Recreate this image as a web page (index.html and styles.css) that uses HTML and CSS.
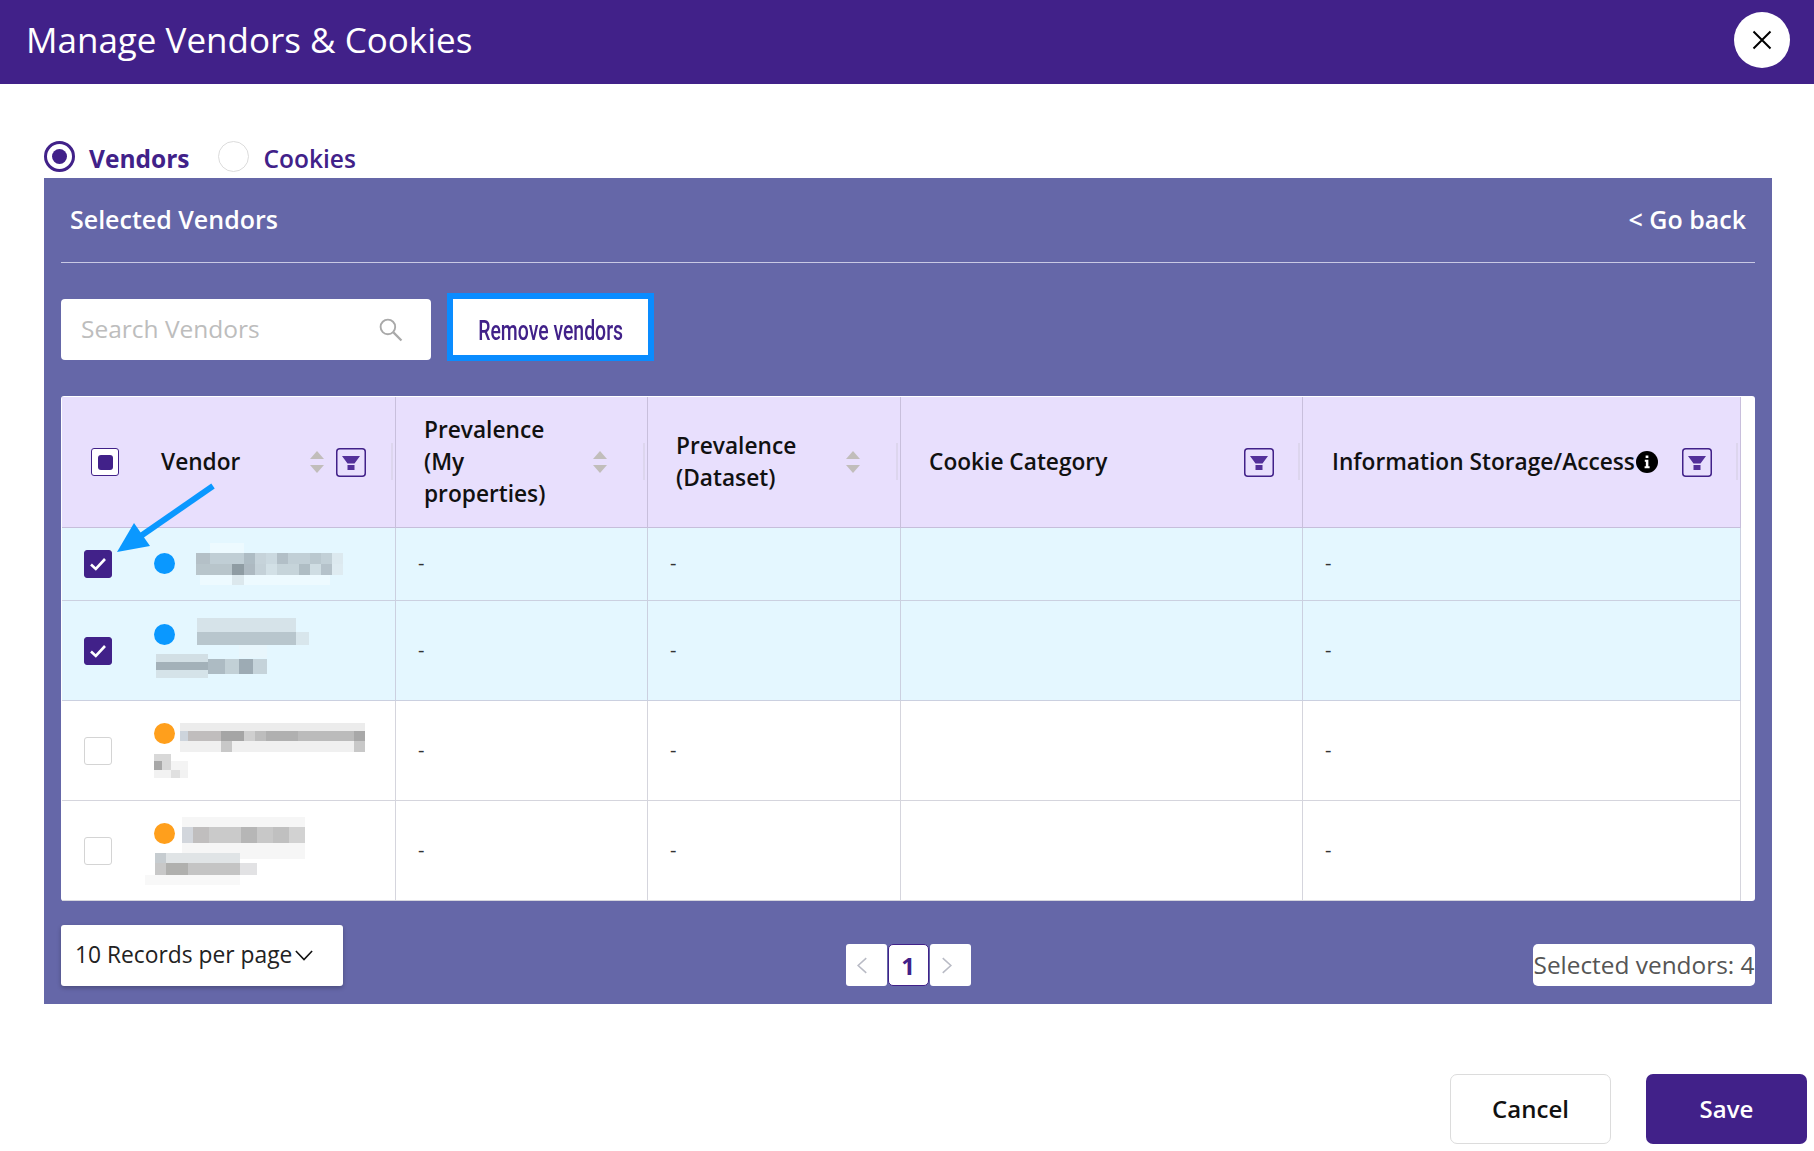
FILE: index.html
```html
<!DOCTYPE html>
<html lang="en">
<head>
<meta charset="utf-8">
<title>Manage Vendors &amp; Cookies</title>
<link rel="stylesheet" href="styles.css">
</head>
<body>
<header class="topbar">
  <h1 class="title">Manage Vendors &amp; Cookies</h1>
  <button class="close" aria-label="Close">
    <svg width="20" height="20" viewBox="0 0 20 20"><path d="M1.5 1.5 18.5 18.5M18.5 1.5 1.5 18.5" fill="none" stroke="#000" stroke-width="2"/></svg>
  </button>
</header>

<div class="radios">
  <span class="radio radio-on"></span><span class="radio-label label-on">Vendors</span>
  <span class="radio radio-off"></span><span class="radio-label">Cookies</span>
</div>

<main class="panel">
  <div class="panel-head">
    <span>Selected Vendors</span>
    <span>&lt; Go back</span>
  </div>

  <div class="toolbar">
    <div class="search">
      <span class="search-text">Search Vendors</span>
      <svg width="25" height="25" viewBox="0 0 24 24"><circle cx="9.5" cy="9.5" r="7" fill="none" stroke="#a9a9a9" stroke-width="1.8"/><path d="M14.8 14.8 22.5 22.5" stroke="#a9a9a9" stroke-width="2.2"/></svg>
    </div>
    <button class="remove"><span class="remove-text">Remove vendors</span></button>
  </div>

  <div class="table-wrap">
    <div class="table">
      <div class="th th-vendor">
        <span class="box box-mixed"><span class="box-dot"></span></span>
        <span class="th-text vendor-label">Vendor</span>
        <svg class="sort" width="14" height="22" viewBox="0 0 14 22"><path d="M7 0 14 8H0ZM0 14H14L7 22Z" fill="#c1bdbb"/></svg>
        <svg class="filter" width="30" height="29" viewBox="0 0 30 29"><rect x=".75" y=".75" width="28.5" height="27.5" rx="3" fill="none" stroke="#412189" stroke-width="1.5"/><path d="M6 8H24L18.5 15.5H11.5ZM11.5 17H18.5V22H11.5Z" fill="#53309a"/></svg>
        <i class="grip"></i>
      </div>
      <div class="th th-prev">
        <span class="th-text prev-text">Prevalence<br>(My<br>properties)</span>
        <svg class="sort" width="14" height="22" viewBox="0 0 14 22"><path d="M7 0 14 8H0ZM0 14H14L7 22Z" fill="#c1bdbb"/></svg>
        <i class="grip"></i>
      </div>
      <div class="th th-prev">
        <span class="th-text prev-text">Prevalence<br>(Dataset)</span>
        <svg class="sort" width="14" height="22" viewBox="0 0 14 22"><path d="M7 0 14 8H0ZM0 14H14L7 22Z" fill="#c1bdbb"/></svg>
        <i class="grip"></i>
      </div>
      <div class="th th-cookie">
        <span class="th-text">Cookie Category</span>
        <svg class="filter" width="30" height="29" viewBox="0 0 30 29"><rect x=".75" y=".75" width="28.5" height="27.5" rx="3" fill="none" stroke="#412189" stroke-width="1.5"/><path d="M6 8H24L18.5 15.5H11.5ZM11.5 17H18.5V22H11.5Z" fill="#53309a"/></svg>
        <i class="grip"></i>
      </div>
      <div class="th th-info">
        <span class="th-text">Information Storage/Access</span>
        <svg class="info" width="22" height="22" viewBox="0 0 21 21"><circle cx="10.5" cy="10.5" r="10.5" fill="#000"/><path d="M9.2 4.2H11.8V6.6H9.2ZM8.4 8.4H11.8V14.6H13V16.4H8.2V14.6H9.4V10.2H8.4Z" fill="#fff"/></svg>
        <svg class="filter" width="30" height="29" viewBox="0 0 30 29"><rect x=".75" y=".75" width="28.5" height="27.5" rx="3" fill="none" stroke="#412189" stroke-width="1.5"/><path d="M6 8H24L18.5 15.5H11.5ZM11.5 17H18.5V22H11.5Z" fill="#53309a"/></svg>
        <i class="grip"></i>
      </div>

      <!-- row 1 -->
      <div class="td td-vendor sel">
        <svg class="mosaic" width="333" height="73" viewBox="62 528 333 73">
          <rect x="210" y="543" width="34" height="10" fill="#edfaff"/><rect x="200" y="575" width="130" height="10" fill="#edfaff"/><rect x="232" y="575" width="12" height="10" fill="#dce8ed"/>
          <rect x="196" y="553" width="14" height="11" fill="#b4c0c7"/><rect x="210" y="553" width="34" height="11" fill="#c0ced5"/><rect x="244" y="553" width="11" height="11" fill="#aebcc4"/><rect x="255" y="553" width="11" height="11" fill="#c6d3da"/><rect x="266" y="553" width="11" height="11" fill="#cbd9e0"/><rect x="277" y="553" width="11" height="11" fill="#b2bfc7"/><rect x="288" y="553" width="22" height="11" fill="#c1cfd6"/><rect x="310" y="553" width="11" height="11" fill="#bac8cf"/><rect x="321" y="553" width="11" height="11" fill="#c2d0d7"/><rect x="332" y="553" width="11" height="11" fill="#dce9ef"/>
          <rect x="196" y="564" width="36" height="11" fill="#b8c5cb"/><rect x="232" y="564" width="12" height="11" fill="#8f9ca3"/><rect x="244" y="564" width="11" height="11" fill="#adb9c1"/><rect x="255" y="564" width="11" height="11" fill="#c4d1d8"/><rect x="266" y="564" width="11" height="11" fill="#d2e0e6"/><rect x="277" y="564" width="22" height="11" fill="#c6d4da"/><rect x="299" y="564" width="11" height="11" fill="#afbdc4"/><rect x="310" y="564" width="11" height="11" fill="#cfdde3"/><rect x="321" y="564" width="11" height="11" fill="#b5c2ca"/><rect x="332" y="564" width="11" height="11" fill="#deebf1"/>
        </svg>
        <span class="box box-on"><svg width="18" height="14" viewBox="0 0 18 14"><path d="M2 7.5 6.8 12 16 2" fill="none" stroke="#fff" stroke-width="2.6"/></svg></span>
        <span class="dot dot-blue dot-mid"></span>
      </div>
      <div class="td sel"><span class="dash">-</span></div>
      <div class="td sel"><span class="dash">-</span></div>
      <div class="td sel"></div>
      <div class="td sel"><span class="dash">-</span></div>

      <!-- row 2 -->
      <div class="td td-vendor sel">
        <svg class="mosaic" width="333" height="100" viewBox="62 601 333 100">
          <rect x="197" y="618" width="99" height="14" fill="#d6e3e9"/><rect x="197" y="632" width="99" height="13" fill="#b8c6cd"/><rect x="296" y="632" width="13" height="13" fill="#d8e6ec"/><rect x="239" y="645" width="28" height="13" fill="#e8f6fc"/>
          <rect x="156" y="654" width="52" height="8" fill="#d2dfe5"/><rect x="156" y="662" width="52" height="8" fill="#a3b1b9"/><rect x="156" y="670" width="52" height="8" fill="#d5e3e9"/>
          <rect x="208" y="659" width="17" height="15" fill="#adbbc3"/><rect x="225" y="659" width="14" height="15" fill="#c2d0d6"/><rect x="239" y="659" width="14" height="15" fill="#9dabb4"/><rect x="253" y="659" width="14" height="15" fill="#c5d3da"/>
        </svg>
        <span class="box box-on"><svg width="18" height="14" viewBox="0 0 18 14"><path d="M2 7.5 6.8 12 16 2" fill="none" stroke="#fff" stroke-width="2.6"/></svg></span>
        <span class="dot dot-blue dot-high dot-up"></span>
      </div>
      <div class="td sel"><span class="dash">-</span></div>
      <div class="td sel"><span class="dash">-</span></div>
      <div class="td sel"></div>
      <div class="td sel"><span class="dash">-</span></div>

      <!-- row 3 -->
      <div class="td td-vendor">
        <svg class="mosaic" width="333" height="100" viewBox="62 701 333 100">
          <rect x="180" y="723" width="185" height="8" fill="#ececec"/>
          <rect x="180" y="731" width="8" height="10" fill="#cdd4dc"/><rect x="188" y="731" width="33" height="10" fill="#c0bdbd"/><rect x="221" y="731" width="23" height="10" fill="#a5a5a5"/><rect x="244" y="731" width="11" height="10" fill="#cfcfcf"/><rect x="255" y="731" width="11" height="10" fill="#bdbdbd"/><rect x="266" y="731" width="32" height="10" fill="#b0b0b0"/><rect x="298" y="731" width="56" height="10" fill="#bbb"/><rect x="354" y="731" width="11" height="10" fill="#a8a8a8"/>
          <rect x="180" y="741" width="185" height="11" fill="#f0f0f0"/><rect x="221" y="741" width="11" height="11" fill="#c8c8c8"/><rect x="354" y="741" width="11" height="11" fill="#c8c8c8"/>
          <rect x="154" y="754" width="17" height="7" fill="#d8d8d8"/><rect x="154" y="761" width="8" height="9" fill="#a8a8a8"/><rect x="162" y="761" width="9" height="9" fill="#d8d8d8"/><rect x="171" y="761" width="17" height="9" fill="#f4f4f4"/><rect x="154" y="770" width="34" height="8" fill="#f2f2f2"/><rect x="171" y="770" width="9" height="8" fill="#e0e0e0"/>
        </svg>
        <span class="box"></span>
        <span class="dot dot-orange dot-high"></span>
      </div>
      <div class="td"><span class="dash">-</span></div>
      <div class="td"><span class="dash">-</span></div>
      <div class="td"></div>
      <div class="td"><span class="dash">-</span></div>

      <!-- row 4 -->
      <div class="td td-vendor">
        <svg class="mosaic" width="333" height="100" viewBox="62 801 333 100">
          <rect x="182" y="817" width="123" height="10" fill="#f6f6f6"/><rect x="182" y="843" width="123" height="16" fill="#f6f6f6"/>
          <rect x="182" y="827" width="11" height="16" fill="#d2d6dc"/><rect x="193" y="827" width="16" height="16" fill="#c0bebe"/><rect x="209" y="827" width="32" height="16" fill="#cacaca"/><rect x="241" y="827" width="16" height="16" fill="#b6b6b6"/><rect x="257" y="827" width="16" height="16" fill="#c8c8c8"/><rect x="273" y="827" width="16" height="16" fill="#c0c0c0"/><rect x="289" y="827" width="16" height="16" fill="#d2d2d2"/>
          <rect x="155" y="853" width="11" height="10" fill="#c6ccd0"/><rect x="166" y="853" width="74" height="10" fill="#e0e4e6"/>
          <rect x="155" y="863" width="11" height="12" fill="#c8c8c8"/><rect x="166" y="863" width="22" height="12" fill="#b0b0ae"/><rect x="188" y="863" width="52" height="12" fill="#c4c4c4"/><rect x="240" y="863" width="17" height="12" fill="#e2e2e4"/>
          <rect x="145" y="875" width="95" height="10" fill="#f8f8f8"/>
        </svg>
        <span class="box"></span>
        <span class="dot dot-orange dot-high"></span>
      </div>
      <div class="td"><span class="dash">-</span></div>
      <div class="td"><span class="dash">-</span></div>
      <div class="td"></div>
      <div class="td"><span class="dash">-</span></div>
    </div>
    <svg class="arrow" width="110" height="80" viewBox="0 0 110 80"><path d="M103 6 25 60" fill="none" stroke="#0a98ff" stroke-width="6"/><path d="M7 72 24 43 40 66Z" fill="#0a98ff"/></svg>
  </div>

  <div class="pager-row">
    <div class="per-page">
      <span class="per-page-text">10 Records per page</span>
      <svg width="18" height="11" viewBox="0 0 20 12"><path d="M1 1 10 10.5 19 1" fill="none" stroke="#111" stroke-width="1.8"/></svg>
    </div>
    <div class="pager">
      <span class="page page-prev"><svg width="12" height="17" viewBox="0 0 14 22"><path d="M12.5 1.5 2 11 12.5 20.5" fill="none" stroke="#b9bbc5" stroke-width="2"/></svg></span>
      <span class="page page-on">1</span>
      <span class="page page-next"><svg width="12" height="17" viewBox="0 0 14 22"><path d="M1.5 1.5 12 11 1.5 20.5" fill="none" stroke="#b9bbc5" stroke-width="2"/></svg></span>
    </div>
    <div class="count">Selected vendors: 4</div>
  </div>
</main>

<footer class="actions">
  <button class="btn btn-cancel"><span class="btn-text">Cancel</span></button>
  <button class="btn btn-save"><span class="btn-text">Save</span></button>
</footer>
</body>
</html>
```

FILE: styles.css
```css
* { box-sizing: border-box; }
html, body { margin: 0; padding: 0; background: #fff; }
body { font-family: "Open Sans", "Noto Sans", sans-serif; color: #111; width: 1814px; height: 1151px; overflow: hidden; }

.topbar { height: 84px; background: #412189; display: flex; align-items: center; justify-content: space-between; padding: 0 24px 0 26px; }
.title { margin: 0 0 6px; font-size: 35px; font-weight: 400; color: #fff; line-height: 1; }
.close { width: 56px; height: 56px; margin-bottom: 4px; border-radius: 50%; border: 0; background: #fff; padding: 0; display: flex; align-items: center; justify-content: center; }

.radios { height: 94px; padding: 57px 0 0 44px; display: flex; align-items: flex-start; }
.radio { width: 31px; height: 31px; border-radius: 50%; flex: none; background: #fff; }
.radio-on { border: 3px solid #412189; position: relative; display: flex; align-items: center; justify-content: center; }
.radio-on::after { content: ""; width: 15px; height: 15px; border-radius: 50%; background: #412189; }
.radio-off { border: 1px solid #dcdcdc; margin-left: 29px; }
.radio-label { font-size: 24.5px; font-weight: 600; color: #412189; line-height: 37px; margin-left: 14px; margin-top: -1px; }
.label-on { font-weight: 700; }

.panel { margin-left: 44px; width: 1728px; height: 826px; background: #6567a8; padding: 0 17px; }
.panel-head { height: 85px; border-bottom: 1px solid #c9c9e4; display: flex; align-items: center; justify-content: space-between; padding: 0 9px 3px; color: #fff; font-size: 25px; font-weight: 600; }

.toolbar { display: flex; align-items: flex-start; gap: 16px; margin-top: 30px; height: 103px; padding-top: 6px; }
.search { width: 370px; height: 61px; background: #fff; border-radius: 4px; display: flex; align-items: center; justify-content: space-between; padding: 0 28px 0 20px; }
.search-text { font-size: 24.5px; color: #bdbdbd; margin-bottom: 2px; }
.remove { width: 207px; height: 68px; margin-top: -6px; background: #fff; border: 6px solid #0a8cff; padding: 8px 0 0; display: flex; align-items: center; justify-content: center; }
.remove-text { font-family: "Roboto", sans-serif; font-size: 27px; font-weight: 500; color: #412189; white-space: nowrap; display: inline-block; transform: scaleX(.72); }

.table-wrap { position: relative; width: 1694px; height: 505px; background: #fff; border-radius: 3px; padding: 1px 0 0 1px; }
.table { display: grid; grid-template-columns: 334px 252px 253px 402px 438px; grid-template-rows: 131px 73px 100px 100px 100px; width: 1679px; height: 504px; }
.th { background: #e8dffd; border-right: 1px solid #c8bfdc; border-bottom: 1px solid #c6bedb; display: flex; align-items: center; position: relative; padding-bottom: 3px; }
.th-text { font-size: 22.7px; font-weight: 600; color: #111; line-height: 32px; }
.grip { position: absolute; right: 2px; top: 46px; height: 37px; width: 2px; background: #ddd6ee; }
.th-vendor { padding: 0 29px 0 29px; }
.vendor-label { margin-left: 14px; flex: 1; padding-left: 28px; }
.th-vendor .sort { margin-right: 12px; }
.th-prev { padding: 0 40px 0 28px; justify-content: space-between; }
.th-cookie { padding: 0 28px 0 28px; justify-content: space-between; }
.th-info { padding: 0 28px 0 29px; }
.info { margin-left: 1px; }
.th-info .filter { margin-left: auto; }

.td { background: #fff; border-right: 1px solid #d5d5dd; border-bottom: 1px solid #d5d5dd; display: flex; align-items: center; padding-left: 22px; font-size: 20px; color: #333; }
.sel { background: #e4f7ff; border-color: #cbd0e0; }
.td-vendor { position: relative; padding-left: 22px; }
.dash { line-height: 1; margin-bottom: 2px; }
.mosaic { position: absolute; left: 0; top: 0; overflow: visible; filter: blur(.6px); }

.box { width: 28px; height: 28px; border-radius: 3px; border: 1px solid #d4d4d4; background: #fff; flex: none; display: flex; align-items: center; justify-content: center; position: relative; }
.box-on { background: #412189; border-color: #412189; }
.box-mixed { border-color: #412189; }
.box-dot { width: 15px; height: 15px; border-radius: 3px; background: #412189; }

.dot { width: 21px; height: 21px; border-radius: 50%; position: relative; margin-left: 42px; flex: none; }
.dot-blue { background: #0a98ff; }
.dot-orange { background: #ff9f1c; }
.dot-mid { margin-bottom: 2px; }
.dot-high { margin-bottom: 34px; }
.dot-up { margin-bottom: 33px; }

.arrow { position: absolute; left: 49px; top: 84px; }

.pager-row { display: grid; grid-template-columns: 1fr auto 1fr; margin-top: 24px; width: 1694px; height: 61px; }
.per-page { justify-self: start; width: 282px; height: 61px; background: #fff; border-radius: 3px; box-shadow: 0 2px 4px rgba(0,0,0,.25); display: flex; align-items: center; padding-left: 14px; gap: 3px; font-size: 22.8px; color: #222; }
.per-page-text { margin-bottom: 3px; }
.pager { display: flex; gap: 1px; align-self: end; height: 42px; }
.page { width: 41px; height: 42px; background: #fff; border-radius: 3px; display: flex; align-items: center; justify-content: center; }
.page-prev { padding-right: 8px; }
.page-next { padding-right: 6px; }
.page-on { border: 1.5px solid #412189; font-size: 24px; font-weight: 700; color: #412189; border-radius: 5px; }
.count { justify-self: end; align-self: end; width: 222px; height: 42px; background: #fff; border-radius: 5px; font-size: 24.4px; color: #555; line-height: 42px; white-space: nowrap; text-align: center; }

.actions { display: flex; justify-content: flex-end; gap: 35px; margin-top: 70px; padding-right: 7px; }
.btn { width: 161px; height: 70px; border-radius: 7px; font-family: inherit; font-size: 24px; font-weight: 600; padding: 0 0 2px; }
.btn-cancel { background: #fff; border: 1px solid #dcdcdc; color: #111; }
.btn-save { background: #412189; border: 0; color: #fff; }
```
